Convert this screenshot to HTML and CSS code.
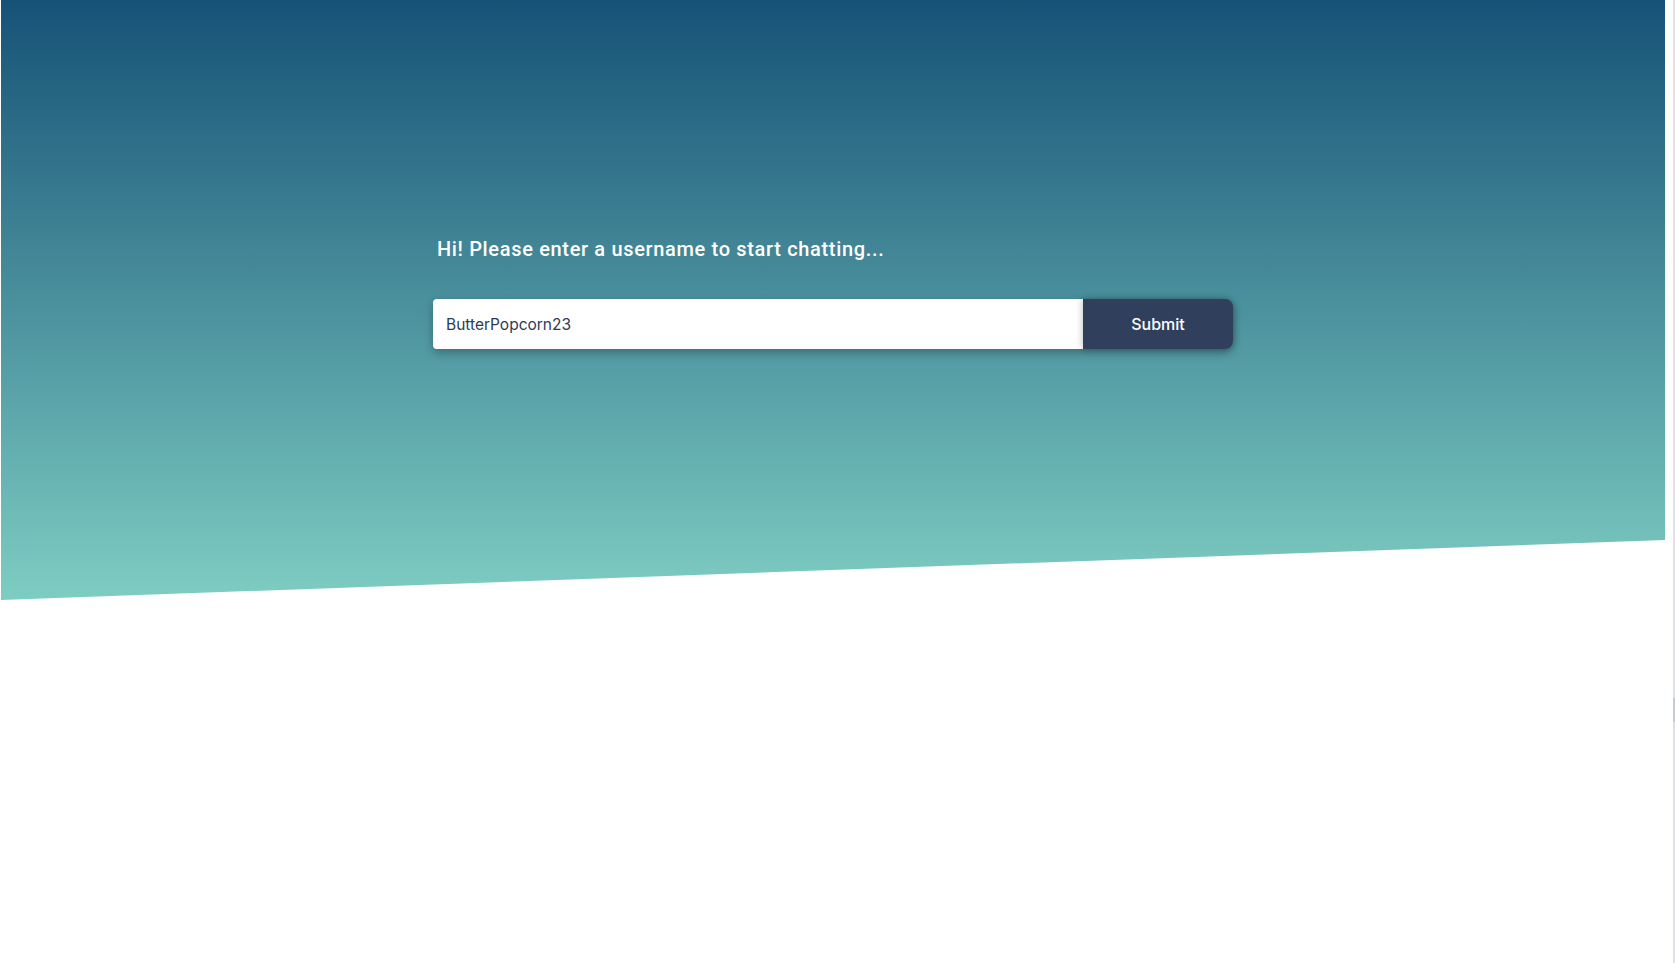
FILE: index.html
```html
<!DOCTYPE html>
<html lang="en">
<head>
<meta charset="utf-8">
<title>Chat</title>
<link rel="stylesheet" href="styles.css">
</head>
<body>
<div class="page">
  <main class="main">
    <section class="hero">
      <div class="login">
        <h1 class="prompt">Hi! Please enter a username to start chatting...</h1>
        <form class="form">
          <input class="name-input" type="text" value="ButterPopcorn23">
          <button class="submit" type="button">Submit</button>
        </form>
      </div>
    </section>
  </main>
  <aside class="rail"><div class="thumb"></div></aside>
</div>
</body>
</html>
```

FILE: styles.css
```css
html, body {
  margin: 0;
  padding: 0;
  height: 100%;
  background: #ffffff;
}
body {
  font-family: Roboto, "Liberation Sans", sans-serif;
  overflow: hidden;
}
.page {
  display: flex;
  height: 963px;
}
.main {
  flex: 1;
  padding-left: 1px;
}
.hero {
  height: 600px;
  background: linear-gradient(180deg, #165277 0%, #7ecdc2 100%);
  clip-path: polygon(0 0, 100% 0, 100% 90%, 0 100%);
  padding-top: 238px;
  box-sizing: border-box;
}
.login {
  width: 800px;
  margin: 0 auto;
}
.prompt {
  margin: 0 0 38px 0;
  padding-left: 4px;
  font-size: 20px;
  line-height: 23px;
  font-weight: 500;
  letter-spacing: 0.66px;
  color: #ffffff;
}
.form {
  display: flex;
  height: 50px;
  border-radius: 4px 8px 8px 4px;
  box-shadow: 0 4px 10px rgba(0, 0, 0, 0.28);
}
.name-input {
  flex: 1;
  border: 0;
  margin: 0;
  padding: 0 13px;
  border-radius: 4px 0 0 4px;
  font-family: Inter, Roboto, sans-serif;
  font-size: 15.5px;
  color: #2e3a55;
  background: #ffffff;
  outline: none;
}
.submit {
  width: 150px;
  border: 0;
  margin: 0;
  border-radius: 0 8px 8px 0;
  background: #2f3f5c;
  color: #ffffff;
  font-family: Inter, Roboto, sans-serif;
  font-size: 16px;
  font-weight: 500;
  box-shadow: 0 0 7px rgba(0, 0, 0, 0.3);
  position: relative;
}
.rail {
  width: 10px;
  display: flex;
  justify-content: flex-end;
}
.thumb {
  width: 2px;
  height: 100%;
  background: linear-gradient(180deg, #dfe0e6 0, #dfe0e6 698px, #c8cad5 698px, #c8cad5 722px, #dfe0e6 722px);
}
```
